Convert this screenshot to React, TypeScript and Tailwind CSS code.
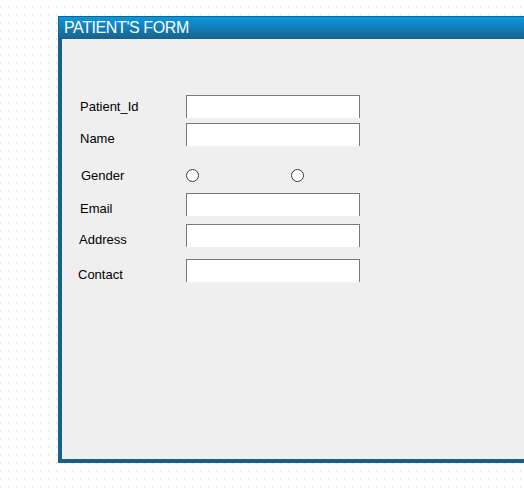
const rows = [
  { label: "Patient_Id", kind: "text", row: "mt-[56px] h-[23px]", lab: "mt-[4px] ml-[18px] w-[106px]" },
  { label: "Name", kind: "text", row: "mt-[5px] h-[23px]", lab: "mt-[8px] ml-[18px] w-[106px]" },
  { label: "Gender", kind: "radio", row: "mt-[23px] h-[15px]", lab: "-mt-px ml-[19px] w-[105px]" },
  { label: "Email", kind: "text", row: "mt-[9px] h-[23px]", lab: "mt-[8px] ml-[18px] w-[106px]" },
  { label: "Address", kind: "text", row: "mt-[8px] h-[23px]", lab: "mt-[8px] ml-[17px] w-[107px]" },
  { label: "Contact", kind: "text", row: "mt-[12px] h-[23px]", lab: "mt-[8px] ml-[16px] w-[108px]" },
];

const Radio = () => (
  <svg width="14" height="14" viewBox="0 0 14 14" className="shrink-0">
    <circle cx="6.5" cy="6.5" r="6" fill="#ffffff" stroke="#3a3a3a" strokeWidth="1" />
  </svg>
);

export default function App() {
  return (
    <div
      className="w-[524px] h-[489px] overflow-hidden pl-[58px] pt-[16px] bg-white bg-[linear-gradient(to_bottom,white_6px,transparent_6px,transparent_8px),linear-gradient(to_right,#dedede_1px,white_1px)] bg-[size:8px_8px]"
      style={{ fontFamily: '"Liberation Sans", Arial, sans-serif' }}
    >
      <div className="w-[466px] h-[447px] flex flex-col border-t border-l border-b-4 border-[#17628b]">
        <div className="h-[22px] shrink-0 bg-gradient-to-b from-[#0499e3] to-[#17618b] flex items-center pl-[5px]">
          <span className="text-white text-[16px] leading-none tracking-[-0.4px]">PATIENT'S FORM</span>
        </div>
        <div className="flex-1 bg-[#efefef] border-l-[3px] border-[#17628b] flex flex-col">
          {rows.map((r) => (
            <div key={r.label} className={`flex items-start ${r.row}`}>
              <div className={`text-[13px] leading-[15px] text-black ${r.lab}`}>{r.label}</div>
              {r.kind === "text" ? (
                <div className="w-[174px] h-[23px] bg-white border-t border-l border-r border-[#7a7a7a]" />
              ) : (
                <div className="flex gap-[91px]">
                  <Radio />
                  <Radio />
                </div>
              )}
            </div>
          ))}
        </div>
      </div>
    </div>
  );
}
